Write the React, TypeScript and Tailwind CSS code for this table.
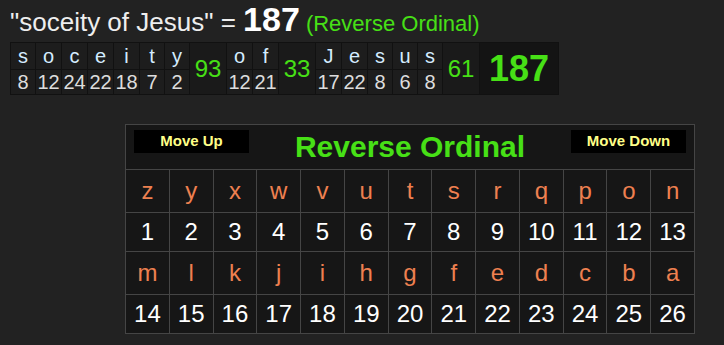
const words = [
  {
    letters: [
      ["s", 8],
      ["o", 12],
      ["c", 24],
      ["e", 22],
      ["i", 18],
      ["t", 7],
      ["y", 2],
    ],
    sum: 93,
  },
  {
    letters: [
      ["o", 12],
      ["f", 21],
    ],
    sum: 33,
  },
  {
    letters: [
      ["J", 17],
      ["e", 22],
      ["s", 8],
      ["u", 6],
      ["s", 8],
    ],
    sum: 61,
  },
] as { letters: [string, number][]; sum: number }[];

const alphabet = "zyxwvutsrqponmlkjihgfedcba".split("");

function CipherRows({ from }: { from: number }) {
  const slice = alphabet.slice(from, from + 13);
  return (
    <>
      {slice.map((ch) => (
        <div
          key={"l" + ch}
          className="h-[42px] bg-[#161616] flex items-center justify-center text-[24px] text-[#ee8050]"
        >
          {ch}
        </div>
      ))}
      {slice.map((ch, i) => (
        <div
          key={"n" + ch}
          className="h-[38px] bg-[#161616] flex items-center justify-center text-[24px] text-white"
        >
          {from + i + 1}
        </div>
      ))}
    </>
  );
}

export default function App() {
  return (
    <div className="min-h-screen bg-[#222222] font-['Liberation_Sans',Arial,sans-serif]">
      {/* Phrase + total */}
      <div className="h-[42px] pl-[10px] pt-[1px] leading-[36px] whitespace-nowrap">
        <span className="text-[26px] text-[#eeeeee]">"soceity of Jesus" = </span>
        <span className="text-[34px] font-bold text-white">187</span>
        <span className="text-[22px] text-[#47e016]"> (Reverse Ordinal)</span>
      </div>

      {/* Letter breakdown */}
      <div className="ml-[10px] inline-flex h-[53px] bg-[#111111] p-px gap-px">
        {words.map((w, wi) => (
          <div key={wi} className="flex gap-px">
            {w.letters.map(([ch, n], i) => (
              <div
                key={i}
                className={`flex flex-col gap-px ${n > 9 ? "w-[25px]" : "w-[24px]"}`}
              >
                <div className="h-[26px] bg-[#1d1d1d] flex items-center justify-center text-[20px] text-[#d4ecff]">
                  {ch}
                </div>
                <div className="h-[24px] bg-[#1d1d1d] flex items-center justify-center text-[20px] text-[#dddddd]">
                  {n}
                </div>
              </div>
            ))}
            <div className="w-[36px] bg-[#1a1a1a] flex items-center justify-center text-[24px] text-[#47e016]">
              {w.sum}
            </div>
          </div>
        ))}
        <div className="w-[78px] bg-[#141414] flex items-center justify-center text-[36px] font-bold text-[#47e016]">
          187
        </div>
      </div>

      {/* Cipher chart */}
      <div className="ml-[125px] mt-[29px] w-[570px] bg-[#454545] p-px grid grid-cols-13 gap-px">
        <div className="col-span-13 h-[44px] bg-[#161616] flex items-start px-[8px]">
          <button className="mt-[5px] w-[115px] h-[23px] bg-black text-[15px] font-bold text-[#ffff88]">
            Move Up
          </button>
          <div className="flex-1 self-center text-center text-[30px] font-bold text-[#47e016] leading-none">
            Reverse Ordinal
          </div>
          <button className="mt-[5px] w-[115px] h-[23px] bg-black text-[15px] font-bold text-[#ffff88]">
            Move Down
          </button>
        </div>
        <CipherRows from={0} />
        <CipherRows from={13} />
      </div>
    </div>
  );
}
